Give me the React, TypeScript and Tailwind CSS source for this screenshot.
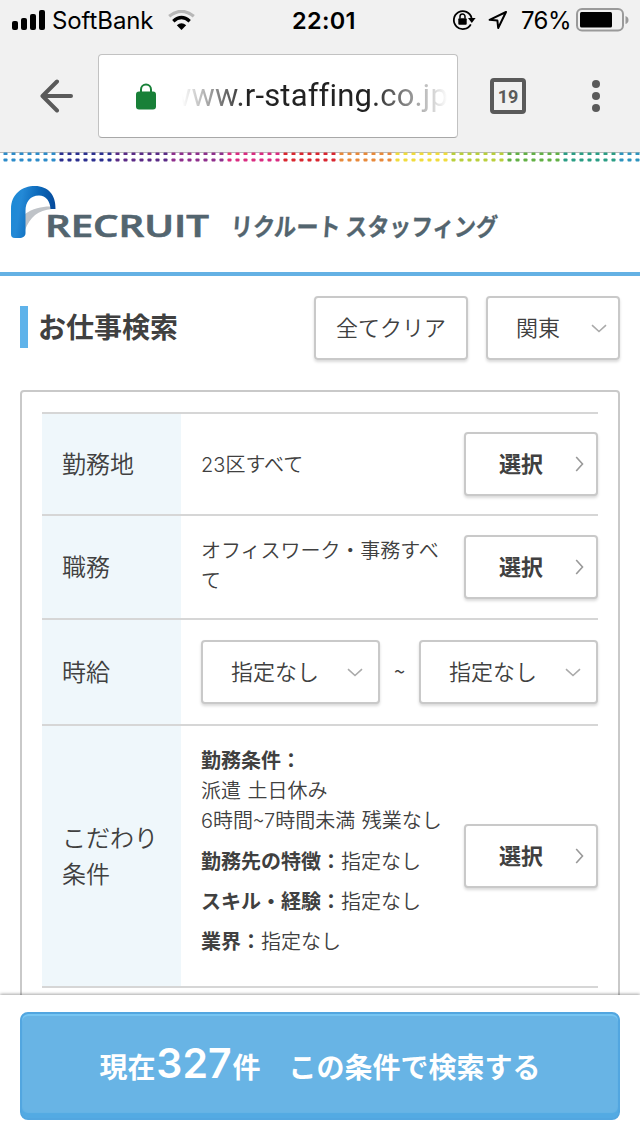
import type { ReactNode } from "react";

const DOT_COLORS = [
  "#2d8bc9",
  "#2b2f8f",
  "#5a2a86",
  "#8e2f8c",
  "#d92b80",
  "#d9252f",
  "#e8893a",
  "#f0dc3c",
  "#b9cf3c",
  "#62b045",
  "#2a9d84",
  "#2d93bd",
];

function StatusBar() {
  return (
    <div className="flex h-10 items-center pl-3 font-[Inter,sans-serif] text-black">
      <svg className="shrink-0" width="33" height="20" viewBox="0 0 33 20">
        <rect x="0" y="11" width="6" height="9" rx="2" />
        <rect x="9" y="8" width="6" height="12" rx="2" />
        <rect x="18" y="4" width="6" height="16" rx="2" />
        <rect x="27" y="0" width="6" height="20" rx="2" />
      </svg>
      <p className="ml-[7px] mt-0.5 w-[104px] shrink-0 whitespace-nowrap text-[24px] tracking-[-0.1px]">SoftBank</p>
      <svg className="ml-3 shrink-0" width="27" height="20" viewBox="0 0 27 20">
        <path d="M1.2 6.3 Q13.5 -3.6 25.8 6.3" fill="none" stroke="#b7b7b7" strokeWidth="3.2" />
        <path d="M5.3 11.2 Q13.5 4 21.7 11.2" fill="none" stroke="#000" strokeWidth="3.4" />
        <path d="M8.8 15.2 Q13.5 11.3 18.2 15.2 L13.5 20 Z" />
      </svg>
      <p className="ml-[97px] mt-0.5 w-[68px] shrink-0 whitespace-nowrap text-[23.5px] font-semibold tracking-[0.3px]">22:01</p>
      <svg className="ml-[92px] shrink-0" width="24" height="22" viewBox="0 0 24 22">
        <path d="M18.8 15.3 A9 9 0 1 1 19.6 9" fill="none" stroke="#000" strokeWidth="1.8" />
        <path d="M16 9 H23.6 L19.8 14 Z" />
        <rect x="6.3" y="9.2" width="8.4" height="6.6" rx="1" />
        <path d="M8 9.5 V7.6 a2.5 2.5 0 0 1 5 0 V9.5" fill="none" stroke="#000" strokeWidth="1.5" />
      </svg>
      <svg className="ml-3 shrink-0" width="20" height="20" viewBox="0 0 20 20">
        <path d="M18 2 L1.6 9.8 L9.4 10.6 L10.2 18 Z" fill="none" stroke="#000" strokeWidth="2" strokeLinejoin="round" />
      </svg>
      <p className="ml-[13px] mt-0.5 w-[49px] shrink-0 whitespace-nowrap text-[24px] tracking-[-0.6px]">76%</p>
      <svg className="ml-[6px] shrink-0" width="54" height="24" viewBox="0 0 54 24">
        <rect x="1" y="1" width="46" height="21.5" rx="5" fill="none" stroke="#9a9a9a" strokeWidth="2" />
        <rect x="4" y="4" width="32" height="15.5" rx="1.5" />
        <path d="M49.5 8 q3 1 3 4 t-3 4 Z" fill="#9a9a9a" />
      </svg>
    </div>
  );
}

function Toolbar() {
  return (
    <div className="flex h-28 items-start pt-[14px]">
      <svg className="ml-10 mt-[25px]" width="34" height="34" viewBox="0 0 34 34">
        <path d="M31 17 H3 M17 2.5 L2.5 17 L17 31.5" fill="none" stroke="#5a5a5a" strokeWidth="4" strokeLinecap="round" strokeLinejoin="round" />
      </svg>
      <div className="ml-6 flex h-[84px] w-[360px] items-center rounded border border-[#c2c2c2] border-b-[#a8a8a8] bg-white">
        <svg className="ml-[37px] mt-px" width="20" height="27" viewBox="0 0 20 27">
          <path d="M5 10 V6.5 a5 5 0 0 1 10 0 V10" fill="none" stroke="#188038" strokeWidth="2" />
          <rect x="0" y="8.5" width="20" height="18" rx="3" fill="#188038" />
        </svg>
        <p className="ml-[26px] flex w-[266px] justify-end overflow-hidden whitespace-nowrap bg-[linear-gradient(to_right,transparent,#222_65px,#222_190px,transparent)] bg-clip-text font-[Roboto,sans-serif] text-[31px] tracking-[0.15px] text-transparent">
          www.r-staffing.co.jp
        </p>
      </div>
      <div className="ml-8 mt-6 flex h-9 w-9 items-center justify-center rounded border-4 border-[#5a5a5a] font-[Roboto,sans-serif] text-[18px] font-bold text-[#5a5a5a]">
        19
      </div>
      <div className="ml-[66px] mt-[26px] flex flex-col gap-1">
        <span className="h-2 w-2 rounded-full bg-[#5a5a5a]" />
        <span className="h-2 w-2 rounded-full bg-[#5a5a5a]" />
        <span className="h-2 w-2 rounded-full bg-[#5a5a5a]" />
      </div>
    </div>
  );
}

function DotStripe() {
  return (
    <svg className="block" width="640" height="12">
      <rect width="640" height="1" fill="#b9b9b9" />
      {Array.from({ length: 80 }, (_, i) => (
        <g key={i} fill={DOT_COLORS[Math.floor(i / 7)]}>
          <rect x={i * 8 + 3.5} y="0.5" width="4" height="2.5" rx="0.5" />
          <rect x={i * 8 + 3.5} y="6.5" width="4" height="3" rx="0.8" />
        </g>
      ))}
    </svg>
  );
}

function Logo() {
  return (
    <svg className="block" width="640" height="108" viewBox="0 164 640 108">
      <defs>
        <linearGradient id="arch" x1="0" y1="0.1" x2="1" y2="0.3">
          <stop offset="0" stopColor="#1a8ad6" />
          <stop offset="0.25" stopColor="#2489d6" />
          <stop offset="0.6" stopColor="#0b68b9" />
          <stop offset="1" stopColor="#064a9b" />
        </linearGradient>
      </defs>
      <path d="M25 214 C33 208 44 206 52 206.500 V209 C38 210 30 217 25 230 Z" fill="#bfc3c8" />
      <path
        d="M11 234 V209 C11 194 22 186 35 186 C48 186 56 195 55.5 209 L50.5 209 C50 201 46 195.500 39 195.500 C30 195.500 25.500 202 25.500 211 V233 C25.500 236.500 23 238 19 238 H15 C12 238 11 236.500 11 234 Z"
        fill="url(#arch)"
      />
      <g fill="#53656f" stroke="#53656f">
        <text x="45" y="237" textLength="164" lengthAdjust="spacingAndGlyphs" strokeWidth="0.7" className="font-[Open_Sans,sans-serif] text-[31px] font-semibold">
          RECRUIT
        </text>
        <g strokeWidth="0.3" className="font-['Noto_Sans_CJK_JP',sans-serif] text-[25px] font-bold">
          <text transform="translate(230 236) skewX(-4)" textLength="110" lengthAdjust="spacingAndGlyphs">
            リクルート
          </text>
          <text transform="translate(345 236) skewX(-4)" textLength="152" lengthAdjust="spacingAndGlyphs">
            スタッフィング
          </text>
        </g>
      </g>
    </svg>
  );
}

function ChevronDown() {
  return (
    <svg width="16" height="9" viewBox="0 0 16 9">
      <path d="M1 1.200 L8 7.500 L15 1.200" fill="none" stroke="#aaa" strokeWidth="1.600" />
    </svg>
  );
}

function SelectButton() {
  return (
    <button className="flex h-16 w-[134px] shrink-0 items-center rounded border-2 border-[#c9c9c9] bg-white pl-[33px] text-[22px] font-bold shadow-[0_2px_3px_rgba(0,0,0,0.15)]">
      <span className="pb-1">選択</span>
      <svg className="ml-8" width="9" height="16" viewBox="0 0 9 16">
        <path d="M1.200 1 L7.500 8 L1.200 15" fill="none" stroke="#999" strokeWidth="1.600" />
      </svg>
    </button>
  );
}

function Dropdown() {
  return (
    <div className="flex h-16 w-[179px] items-center justify-between rounded border-2 border-[#c9c9c9] bg-white pl-7 pr-[15px] text-[22px] shadow-[0_2px_3px_rgba(0,0,0,0.15)]">
      <span className="pb-1">指定なし</span>
      <ChevronDown />
    </div>
  );
}

function Heading({ children }: { children: ReactNode }) {
  return (
    <div className="flex w-[139px] shrink-0 items-center bg-[#eff7fb] pb-0.5 pl-5 text-2xl leading-9">
      <p>{children}</p>
    </div>
  );
}

export default function App() {
  return (
    <div className="flex h-[1136px] w-[640px] flex-col overflow-hidden bg-white font-['Noto_Sans_CJK_JP',sans-serif] text-[#404040]">
      <div className="shrink-0 bg-[#f1f1f1]">
        <StatusBar />
        <Toolbar />
      </div>
      <header className="h-[124px] shrink-0 border-b-4 border-[#64b1e4]">
        <DotStripe />
        <Logo />
      </header>

      <div className="flex min-h-0 flex-1 flex-col overflow-hidden px-5 pt-5">
        <div className="flex shrink-0 items-center">
          <h1 className="mb-0.5 flex h-[42px] items-center border-l-8 border-[#5fb3ea] pb-0.5 pl-[10px] text-[28px] font-bold">お仕事検索</h1>
          <button className="ml-auto h-16 w-[154px] rounded border-2 border-[#c9c9c9] pb-1 text-[22px] font-[350] shadow-[0_2px_3px_rgba(0,0,0,0.15)]">
            全てクリア
          </button>
          <div className="ml-[18px] flex h-16 w-[134px] items-center justify-between rounded border-2 border-[#c9c9c9] pl-7 pr-[11px] text-[22px] font-[350] shadow-[0_2px_3px_rgba(0,0,0,0.15)]">
            <span className="pb-1">関東</span>
            <ChevronDown />
          </div>
        </div>

        <div className="mt-[30px] h-[660px] shrink-0 rounded border-2 border-[#c9c9c9] p-5 font-[350]">
          <div className="border-t-2 border-[#d6d6d6]">
            <div className="flex h-[102px] border-b-2 border-[#d6d6d6]">
              <Heading>勤務地</Heading>
              <div className="flex flex-1 items-center justify-between pl-5 text-xl">
                <p><span className="font-[Inter,sans-serif] font-light">23</span>区すべて</p>
                <SelectButton />
              </div>
            </div>
            <div className="flex h-[104px] border-b-2 border-[#d6d6d6]">
              <Heading>職務</Heading>
              <div className="flex flex-1 items-center justify-between pl-5 text-xl leading-[30px]">
                <p className="w-[243px] pb-1">オフィスワーク・事務すべて</p>
                <SelectButton />
              </div>
            </div>
            <div className="flex h-[106px] border-b-2 border-[#d6d6d6]">
              <Heading>時給</Heading>
              <div className="flex flex-1 items-center justify-between pl-5 text-xl">
                <Dropdown />
                <span className="pb-0.5 font-normal">~</span>
                <Dropdown />
              </div>
            </div>
            <div className="flex h-[262px] border-b-2 border-[#d6d6d6]">
              <Heading>こだわり<br />条件</Heading>
              <div className="flex flex-1 items-center justify-between pl-5 text-xl leading-[30px]">
                <div className="flex w-[243px] flex-col gap-[10px] whitespace-nowrap pb-3">
                  <p>
                    <b className="font-bold">勤務条件：</b><br />
                    <span className="[word-spacing:2px]">派遣 土日休み</span><br />
                    <span className="[word-spacing:2px]">
                      <span className="font-[Inter,sans-serif] font-light">6</span>時間~<span className="font-[Inter,sans-serif] font-light">7</span>時間未満 残業なし
                    </span>
                  </p>
                  <p><b className="font-bold">勤務先の特徴：</b>指定なし</p>
                  <p><b className="font-bold">スキル・経験：</b>指定なし</p>
                  <p><b className="font-bold">業界：</b>指定なし</p>
                </div>
                <SelectButton />
              </div>
            </div>
          </div>
        </div>
      </div>

      <footer className="z-10 h-[141px] shrink-0 bg-white px-5 pt-[17px] shadow-[0_-1px_3px_rgba(0,0,0,0.35)]">
        <button className="flex h-[108px] w-full items-center justify-center rounded-lg border-2 border-[#52a6e0] bg-[#68b4e5] pb-0.5 text-[28px] font-bold text-white shadow-[inset_0_2px_0_#76c5f2,inset_0_-5px_1px_#53aae3]">
          <span className="flex items-baseline whitespace-pre">
            現在<span className="w-[77px] font-[Inter,sans-serif] text-[41px] font-semibold leading-none">327</span>件　この条件で検索する
          </span>
        </button>
      </footer>
    </div>
  );
}
